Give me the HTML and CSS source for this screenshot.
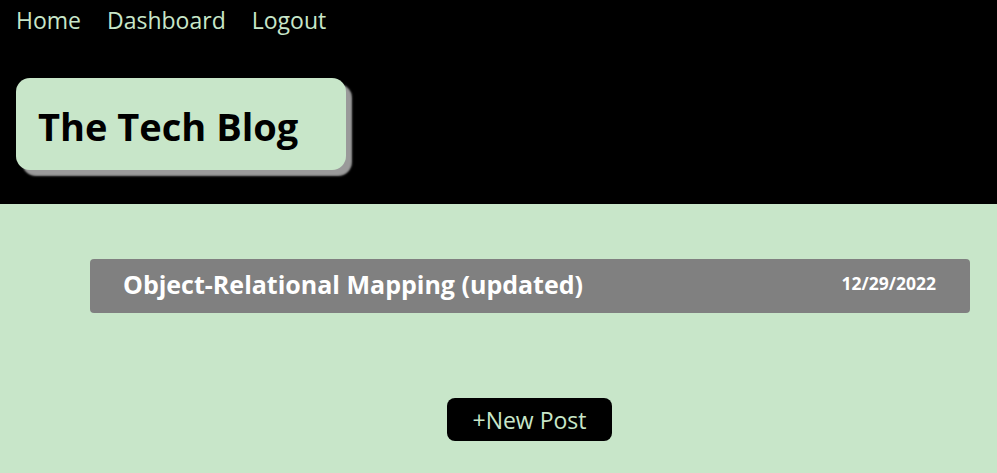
FILE: index.html
```html
<!DOCTYPE html>
<html>
<head>
<meta charset="utf-8">
<link rel="stylesheet" href="styles.css">
</head>
<body>
<header class="header">
  <nav class="nav">
    <a href="#">Home</a>
    <a href="#">Dashboard</a>
    <a href="#">Logout</a>
  </nav>
  <div class="brand"><h1>The Tech Blog</h1></div>
</header>
<main class="main">
  <div class="post">
    <span class="post-title">Object-Relational Mapping (updated)</span>
    <span class="post-date">12/29/2022</span>
  </div>
  <div class="actions">
    <button class="new-post">+New Post</button>
  </div>
</main>
</body>
</html>
```
FILE: styles.css
```css
html, body {
  margin: 0;
  padding: 0;
  background: #c8e6c9;
  font-family: "Open Sans", "Noto Sans", sans-serif;
}
.header {
  background: #000;
  height: 204px;
  padding: 0 16px;
  box-sizing: border-box;
}
.nav {
  display: flex;
  gap: 26px;
  padding-top: 3px;
  height: 34px;
  align-items: center;
}
.nav a {
  color: #c8e6c9;
  text-decoration: none;
  font-size: 23px;
  line-height: 34px;
}
.brand {
  margin-top: 41px;
  width: 330px;
  height: 92px;
  background: #c8e6c9;
  border-radius: 14px;
  box-shadow: 6px 6px 2px #9a9a9a;
  display: flex;
  align-items: center;
  padding-left: 22px;
  padding-top: 3px;
  box-sizing: border-box;
}
.brand h1 {
  margin: 0;
  font-size: 38px;
  font-weight: 700;
  color: #000;
}
.main {
  padding: 55px 27px 0 90px;
}
.post {
  background: #808080;
  border-radius: 4px;
  height: 54px;
  display: flex;
  align-items: center;
  justify-content: space-between;
  padding: 0 34px 0 33px;
  color: #fff;
}
.post-title {
  font-size: 25px;
  font-weight: 700;
  margin-top: -4px;
}
.post-date {
  font-size: 17.5px;
  font-weight: 700;
  margin-top: -6px;
}
.actions {
  display: flex;
  justify-content: center;
  padding-top: 85px;
  margin-left: -90px;
  margin-right: -27px;
}
.new-post {
  background: #000;
  color: #c8e6c9;
  border: none;
  border-radius: 8px;
  width: 165px;
  height: 43px;
  font-family: inherit;
  font-size: 23px;
  padding: 0;
  margin-left: 62px;
}
```
